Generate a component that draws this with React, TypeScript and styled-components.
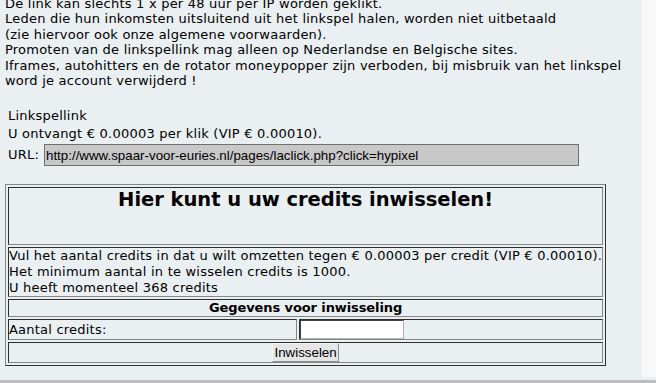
import React from "react";
import styled, { createGlobalStyle } from "styled-components";

const GlobalStyle = createGlobalStyle`
  html, body { margin: 0; padding: 0; }
  body { background: #eaeff2; overflow: hidden; }
`;

const Page = styled.div`
  width: 656px;
  height: 383px;
  display: flex;
  flex-direction: column;
  overflow: hidden;
`;

const Body = styled.div`
  display: flex;
  align-items: flex-start;
  height: 380px;
  background: #eaeff2;
`;

const Main = styled.div`
  width: 642px;
  height: 380px;
  box-sizing: border-box;
  padding-left: 5px;
  overflow: hidden;
  font-family: "DejaVu Sans", Verdana, sans-serif;
  font-size: 13px;
  letter-spacing: 0.22px;
  color: #000;
`;

const Side = styled.div`
  flex: 1;
  height: 377px;
  background: #f8f8f8;
`;

const Band = styled.div`
  height: 3px;
  background: #bdbdbd;
`;

const Rules = styled.div`
  margin-top: -4.5px;
  line-height: 15.5px;
  white-space: nowrap;
`;

const Line = styled.div`
  height: 15.5px;
`;

const LinkInfo = styled.div`
  display: flex;
  flex-direction: column;
  padding: 4px 0 0 3px;
`;

const InfoLine = styled.div`
  height: 18px;
  line-height: 16px;
  white-space: nowrap;
`;

const UrlRow = styled.div`
  display: flex;
  align-items: center;
  height: 22px;
  line-height: 16px;
`;

const UrlLabel = styled.span`
  width: 36px;
  flex: none;
`;

const UrlField = styled.input`
  box-sizing: border-box;
  width: 535px;
  height: 22px;
  margin: 0;
  padding: 0 1px;
  background: #c8c8c8;
  border: 1px solid #6f6f6f;
  font-family: "Liberation Sans", Arial, sans-serif;
  font-size: 13.33px;
  letter-spacing: normal;
  color: #000;
  outline: none;
`;

const ExchangeTable = styled.table`
  box-sizing: border-box;
  width: 601px;
  margin-top: 18px;
  border-collapse: separate;
  border-spacing: 2px;
  border: 1px solid;
  border-color: #858585 #2e2e2e #2e2e2e #858585;
  font: inherit;
  color: inherit;
`;

const Cell = styled.td<{ $h: number; $center?: boolean; $w?: number }>`
  padding: 0;
  height: ${(p) => p.$h}px;
  ${(p) => (p.$w ? `width: ${p.$w}px;` : "")}
  border: 1px solid;
  border-color: #2e2e2e #858585 #858585 #2e2e2e;
  text-align: ${(p) => (p.$center ? "center" : "left")};
  vertical-align: middle;
  line-height: 16px;
  white-space: nowrap;
`;

const HeadCell = styled(Cell)`
  vertical-align: top;
`;

const Heading = styled.h2`
  margin: 0;
  font-size: 19.5px;
  line-height: 24px;
  font-weight: bold;
  letter-spacing: -0.03px;
`;

const SectionTitle = styled.span`
  font-weight: bold;
  letter-spacing: -0.1px;
`;

const AmountField = styled.input`
  display: block;
  box-sizing: border-box;
  width: 104px;
  height: 19px;
  margin: 0;
  padding: 0 2px;
  background: #fff;
  border: 1px solid;
  border-color: #404040 #b4b4b4 #b4b4b4 #404040;
  font-family: "Liberation Sans", Arial, sans-serif;
  font-size: 13.33px;
  letter-spacing: normal;
  outline: none;
`;

const SubmitButton = styled.button`
  box-sizing: border-box;
  height: 19px;
  margin: 0;
  padding: 0 1px;
  background: #e6e6e6;
  border: 1px solid;
  border-color: #f4f4f4 #8e8e8e #8e8e8e #f4f4f4;
  font-family: "Liberation Sans", Arial, sans-serif;
  font-size: 13.33px;
  letter-spacing: normal;
  line-height: 15px;
  color: #000;
  vertical-align: top;
`;

const rules = [
  "De link kan slechts 1 x per 48 uur per IP worden geklikt.",
  "Leden die hun inkomsten uitsluitend uit het linkspel halen, worden niet uitbetaald",
  "(zie hiervoor ook onze algemene voorwaarden).",
  "Promoten van de linkspellink mag alleen op Nederlandse en Belgische sites.",
  "Iframes, autohitters en de rotator moneypopper zijn verboden, bij misbruik van het linkspel",
  "word je account verwijderd !",
  "",
];

export default function App() {
  return (
    <>
      <GlobalStyle />
      <Page>
        <Body>
          <Main>
            <Rules>
              {rules.map((r, i) => (
                <Line key={i}>{r}</Line>
              ))}
            </Rules>
            <LinkInfo>
              <InfoLine>Linkspellink</InfoLine>
              <InfoLine>U ontvangt € 0.00003 per klik (VIP € 0.00010).</InfoLine>
              <UrlRow>
                <UrlLabel>URL:</UrlLabel>
                <UrlField
                  readOnly
                  value="http://www.spaar-voor-euries.nl/pages/laclick.php?click=hypixel"
                />
              </UrlRow>
            </LinkInfo>
            <ExchangeTable>
              <tbody>
                <tr>
                  <HeadCell $h={56} $center colSpan={2}>
                    <Heading>Hier kunt u uw credits inwisselen!</Heading>
                  </HeadCell>
                </tr>
                <tr>
                  <Cell $h={48} colSpan={2}>
                    Vul het aantal credits in dat u wilt omzetten tegen € 0.00003 per credit (VIP € 0.00010).
                    <br />
                    Het minimum aantal in te wisselen credits is 1000.
                    <br />U heeft momenteel 368 credits
                  </Cell>
                </tr>
                <tr>
                  <Cell $h={16} $center colSpan={2}>
                    <SectionTitle>Gegevens voor inwisseling</SectionTitle>
                  </Cell>
                </tr>
                <tr>
                  <Cell $h={19} $w={287}>
                    Aantal credits:
                  </Cell>
                  <Cell $h={19}>
                    <AmountField type="text" />
                  </Cell>
                </tr>
                <tr>
                  <Cell $h={19} $center colSpan={2}>
                    <SubmitButton type="button">Inwisselen</SubmitButton>
                  </Cell>
                </tr>
              </tbody>
            </ExchangeTable>
          </Main>
          <Side />
        </Body>
        <Band />
      </Page>
    </>
  );
}
